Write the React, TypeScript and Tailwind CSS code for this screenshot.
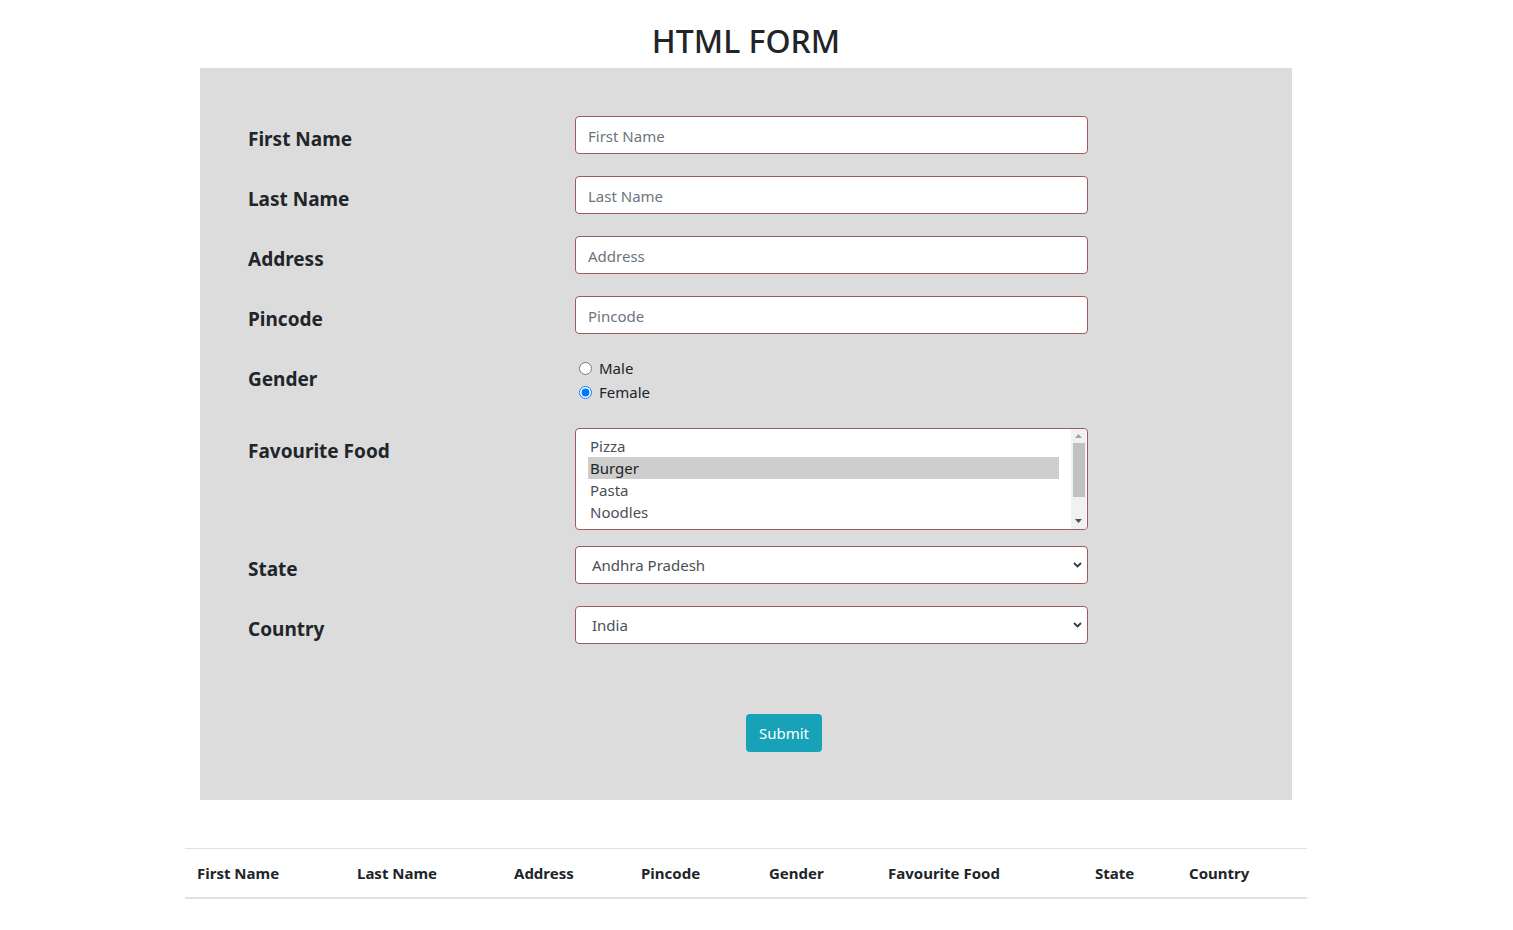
import React from 'react';

const font = "font-['Segoe_UI','Noto_Sans','Open_Sans',sans-serif]";

const fields = [
  { label: 'First Name', placeholder: 'First Name' },
  { label: 'Last Name', placeholder: 'Last Name' },
  { label: 'Address', placeholder: 'Address' },
  { label: 'Pincode', placeholder: 'Pincode' },
];

const foods = ['Pizza', 'Burger', 'Pasta', 'Noodles', 'Biryani'];

const columns = [
  { name: 'First Name', width: 'w-[160px]' },
  { name: 'Last Name', width: 'w-[157px]' },
  { name: 'Address', width: 'w-[127px]' },
  { name: 'Pincode', width: 'w-[128px]' },
  { name: 'Gender', width: 'w-[119px]' },
  { name: 'Favourite Food', width: 'w-[207px]' },
  { name: 'State', width: 'w-[94px]' },
  { name: 'Country', width: 'w-[130px]' },
];

const Label: React.FC<{ children: React.ReactNode }> = ({ children }) => (
  <div className="w-[327px] shrink-0 pt-[11px] text-[19px] leading-[25px] font-bold text-[#212529]">
    {children}
  </div>
);

const Chevron = () => (
  <svg className="absolute right-[5px] top-1/2 -translate-y-1/2" width="9" height="6" viewBox="0 0 9 6">
    <path d="M1 1l3.5 3.5L8 1" fill="none" stroke="#343a40" strokeWidth="1.8" />
  </svg>
);

const SelectBox: React.FC<{ value: string }> = ({ value }) => (
  <div className="relative w-[513px] h-[38px] rounded-[4px] border border-[#9e5b5b] bg-white flex items-center pl-[16px] pt-[1px] text-[15px] text-[#495057]">
    {value}
    <Chevron />
  </div>
);

export default function App() {
  return (
    <div className={`${font} min-h-[930px] bg-white`}>
      <div className="w-[1122px] ml-[185px]">
        <h2 className="pt-[21px] pb-[8px] text-center text-[32px] leading-[39px] font-medium text-[#212529]">
          HTML FORM
        </h2>

        <div className="mx-[15px] bg-[#dcdcdc] px-[48px] pt-[48px] pb-[48px]">
          {fields.map((f) => (
            <div key={f.label} className="flex mb-[22px]">
              <Label>{f.label}</Label>
              <input
                placeholder={f.placeholder}
                className="w-[513px] h-[38px] rounded-[4px] border border-[#9e5b5b] bg-white px-[12px] pt-[1px] text-[15px] text-[#495057] placeholder:text-[#6c757d] outline-none"
              />
            </div>
          ))}

          <div className="flex mb-[24px]">
            <Label>Gender</Label>
            <div className="text-[15px] leading-[24px] text-[#212529]">
              <label className="flex items-center gap-[7px] pl-[4px]">
                <input type="radio" name="gender" className="m-0 w-[13px] h-[13px]" />
                Male
              </label>
              <label className="flex items-center gap-[7px] pl-[4px]">
                <input type="radio" name="gender" defaultChecked className="m-0 w-[13px] h-[13px]" />
                Female
              </label>
            </div>
          </div>

          <div className="flex mb-[16px]">
            <Label>Favourite Food</Label>
            <div className="relative w-[513px] h-[102px] rounded-[4px] border border-[#9e5b5b] bg-white overflow-hidden">
              <div className="pt-[6px] pl-[12px] pr-[28px] text-[15px] leading-[22px] text-[#495057]">
                {foods.map((food) => (
                  <div
                    key={food}
                    className={food === 'Burger' ? 'px-[2px] bg-[#cecece] text-[#212529]' : 'px-[2px]'}
                  >
                    {food}
                  </div>
                ))}
              </div>
              <div className="absolute right-[1px] top-0 bottom-0 w-[15px] bg-[#f1f1f1] flex flex-col items-center">
                <svg className="mt-[5px]" width="7" height="4" viewBox="0 0 7 4">
                  <path d="M3.5 0L7 4H0z" fill="#a3a3a3" />
                </svg>
                <div className="mt-[5px] w-[12px] h-[54px] bg-[#c1c1c1]" />
                <svg className="mt-auto mb-[6px]" width="7" height="4" viewBox="0 0 7 4">
                  <path d="M0 0h7L3.5 4z" fill="#505050" />
                </svg>
              </div>
            </div>
          </div>

          <div className="flex mb-[22px]">
            <Label>State</Label>
            <SelectBox value="Andhra Pradesh" />
          </div>

          <div className="flex">
            <Label>Country</Label>
            <SelectBox value="India" />
          </div>

          <div className="mt-[70px] pl-[498px]">
            <button className="h-[38px] w-[76px] rounded-[4px] bg-[#17a2b8] text-white text-[15px] leading-[24px]">
              Submit
            </button>
          </div>
        </div>

        <table className="mt-[48px] w-[1122px] table-fixed border-collapse text-[15px] text-[#212529]">
          <thead>
            <tr className="border-t border-[#dee2e6] border-b-2">
              {columns.map((c) => (
                <th key={c.name} className={`${c.width} p-[12px] text-left font-bold leading-[24px]`}>
                  {c.name}
                </th>
              ))}
            </tr>
          </thead>
        </table>
      </div>
    </div>
  );
}
